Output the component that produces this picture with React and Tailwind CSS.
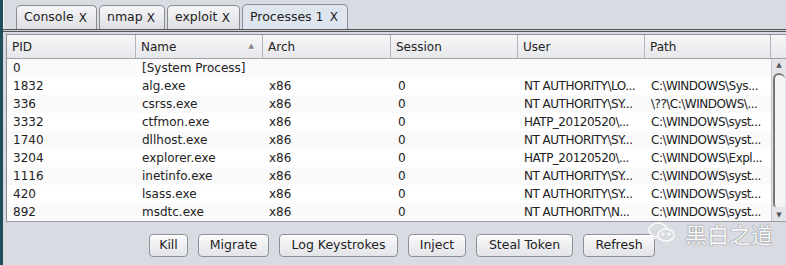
import React from 'react';

const rows = [
  ['0', '[System Process]', '', '', '', ''],
  ['1832', 'alg.exe', 'x86', '0', 'NT AUTHORITY\\LO...', 'C:\\WINDOWS\\Sys...'],
  ['336', 'csrss.exe', 'x86', '0', 'NT AUTHORITY\\SY...', '\\??\\C:\\WINDOWS\\...'],
  ['3332', 'ctfmon.exe', 'x86', '0', 'HATP_20120520\\...', 'C:\\WINDOWS\\syst...'],
  ['1740', 'dllhost.exe', 'x86', '0', 'NT AUTHORITY\\SY...', 'C:\\WINDOWS\\syst...'],
  ['3204', 'explorer.exe', 'x86', '0', 'HATP_20120520\\...', 'C:\\WINDOWS\\Expl...'],
  ['1116', 'inetinfo.exe', 'x86', '0', 'NT AUTHORITY\\SY...', 'C:\\WINDOWS\\syst...'],
  ['420', 'lsass.exe', 'x86', '0', 'NT AUTHORITY\\SY...', 'C:\\WINDOWS\\syst...'],
  ['892', 'msdtc.exe', 'x86', '0', 'NT AUTHORITY\\N...', 'C:\\WINDOWS\\syst...'],
];

const cols = [
  { label: 'PID', w: 'w-[129px]' },
  { label: 'Name', w: 'w-[127px]', sort: true },
  { label: 'Arch', w: 'w-[128px]' },
  { label: 'Session', w: 'w-[127px]' },
  { label: 'User', w: 'w-[127px]' },
  { label: 'Path', w: 'w-[126px]' },
];

const tabs = [
  { label: 'Console', w: 'w-[81px]' },
  { label: 'nmap', w: 'w-[66px]' },
  { label: 'exploit', w: 'w-[73px]' },
  { label: 'Processes 1', w: 'w-[106px]', active: true },
];

const buttons = [
  { label: 'Kill', w: 'w-[39px]' },
  { label: 'Migrate', w: 'w-[71px]' },
  { label: 'Log Keystrokes', w: 'w-[119px]' },
  { label: 'Inject', w: 'w-[58px]' },
  { label: 'Steal Token', w: 'w-[97px]' },
  { label: 'Refresh', w: 'w-[72px]' },
];

export default function App() {
  return (
    <div className="flex w-[786px] h-[265px] overflow-hidden bg-[#d9dbe2] text-[12px] text-[#222] [font-family:'DejaVu_Sans',sans-serif]">
      {/* left window edge */}
      <div className="w-[3px] bg-[#1e4d5c]" />

      <div className="flex-1 flex flex-col">
        {/* tab strip */}
        <div className="h-[29px] pl-[12px] pt-[5px] flex items-end gap-[2px] border-l border-[#f4f5f8]">
          {tabs.map((t) => (
            <div
              key={t.label}
              className={`${t.w} flex items-center justify-between pl-[7px] pr-[9px] rounded-t-[5px] border border-b-0 border-[#8a8c94] text-[12.5px] ${
                t.active ? 'bg-[#dfe5ee] h-[25px]' : 'h-[24px] bg-gradient-to-b from-[#f6f6f8] to-[#dedfe4]'
              }`}
            >
              <span>{t.label}</span>
              <span className="text-[12px]">X</span>
            </div>
          ))}
        </div>
        <div className="h-[3px] border-t border-b border-[#555] bg-[#c9ccd4]" />

        {/* table */}
        <div className="mt-[2px] ml-[3px] flex flex-col border-l border-t border-[#8d8f96] bg-white">
          <div className="flex h-[24px] border-b border-[#a0a2a8] bg-gradient-to-b from-[#f7f7f8] to-[#e6e7ea]">
            {cols.map((c) => (
              <div key={c.label} className={`${c.w} flex items-center justify-between pl-[5px] pr-[8px] border-r border-[#b3b5bb]`}>
                <span>{c.label}</span>
                {c.sort && <span className="text-[7px] text-[#888]">▲</span>}
              </div>
            ))}
            <div className="flex-1" />
          </div>
          <div className="flex">
            <div className="flex flex-col">
              {rows.map((r, i) => (
                <div key={i} className={`flex h-[18px] items-center ${i % 2 ? 'bg-white' : 'bg-[#fafafb]'}`}>
                  {r.map((v, j) => (
                    <div
                      key={j}
                      className={`${cols[j].w} whitespace-nowrap overflow-hidden ${j === 3 ? 'pl-[7px]' : 'pl-[6px]'} ${
                        j >= 4 ? 'tracking-[-0.5px]' : ''
                      }`}
                    >
                      {v}
                    </div>
                  ))}
                </div>
              ))}
            </div>
            {/* scrollbar */}
            <div className="flex-1 flex flex-col bg-[#e4e5e9] border-l border-[#c4c6cb]">
              <div className="h-[12px] flex items-center justify-center text-[7px] text-[#555]">▲</div>
              <div className="flex-1 mx-[1px] my-[2px] rounded-t-[12px] rounded-b-[6px] border-l-2 border-t-2 border-[#777] bg-[#f4f4f6]" />
              <div className="h-[12px] flex items-center justify-center text-[7px] text-[#555]">▼</div>
            </div>
          </div>
          <div className="h-[1px] bg-[#9a9ca2]" />
        </div>

        {/* buttons */}
        <div className="relative flex-1 flex items-start pt-[12px] pl-[146px] gap-[10px] text-[12.5px]">
          {buttons.map((b) => (
            <div
              key={b.label}
              className={`${b.w} h-[23px] flex items-center justify-center rounded-[4px] border border-[#8e9097] bg-gradient-to-b from-[#fbfbfc] to-[#e3e4e8] shadow-[inset_0_1px_0_#fff]`}
            >
              {b.label}
            </div>
          ))}

          {/* watermark */}
          <div className="absolute left-[644px] top-[-1px] flex items-center gap-[8px]">
            <svg width="30" height="24" viewBox="0 0 30 24" fill="none" stroke="#f8f8fa" strokeWidth="1.6">
              <ellipse cx="11" cy="9" rx="9" ry="7" />
              <path d="M5 15 l-2 4 l5 -2" />
              <ellipse cx="19" cy="14" rx="8" ry="6" fill="#d9dbe2" />
              <circle cx="16" cy="13" r="0.8" fill="#f8f8fa" />
              <circle cx="22" cy="13" r="0.8" fill="#f8f8fa" />
            </svg>
            <span className="text-[22px] leading-none text-[#fafafc] [text-shadow:0_0_1px_#777,0_0_1px_#777] [font-family:'Noto_Sans_CJK_SC',sans-serif]">黑白之道</span>
          </div>
        </div>
      </div>
    </div>
  );
}
